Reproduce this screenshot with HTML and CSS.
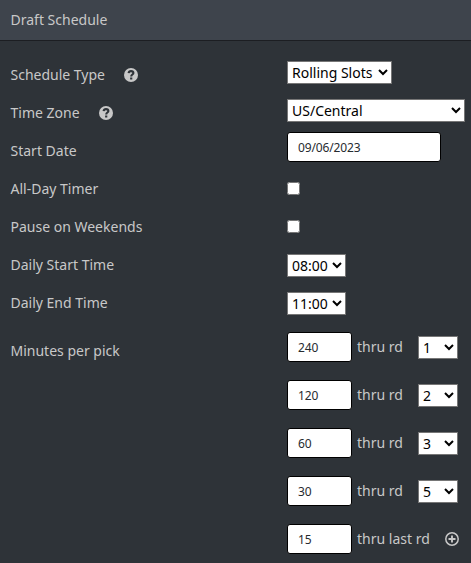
FILE: index.html
```html
<!DOCTYPE html>
<html>
<head>
    <meta charset="utf-8">
    <title>Draft Schedule</title>
    <link rel="stylesheet" href="styles.css">
</head>
<body>
    <div class="panel">
        <div class="panel-heading">Draft Schedule</div>
        <div class="panel-body">
            <div class="row">
                <div class="label">Schedule Type
                    <svg class="help" viewBox="0 0 14 14"><circle cx="7" cy="7" r="7" fill="#c8c8c8"/><path d="M4.6 5.2C4.800 3.700 5.800 3.100 7 3.100c1.400 0 2.400.7 2.400 1.900C9.400 6.600 7.200 6.500 7.200 8.500" fill="none" stroke="#2e3338" stroke-width="2.100"/><rect x="6.100" y="9.500" width="2.200" height="2" fill="#2e3338"/></svg>
                </div>
                <select class="type"><option>Rolling Slots</option></select>
            </div>
            <div class="row">
                <div class="label">Time Zone
                    <svg class="help" viewBox="0 0 14 14"><circle cx="7" cy="7" r="7" fill="#c8c8c8"/><path d="M4.6 5.2C4.800 3.700 5.800 3.100 7 3.100c1.400 0 2.400.7 2.400 1.900C9.400 6.600 7.200 6.500 7.200 8.500" fill="none" stroke="#2e3338" stroke-width="2.100"/><rect x="6.100" y="9.500" width="2.200" height="2" fill="#2e3338"/></svg>
                </div>
                <select class="zone"><option>US/Central</option></select>
            </div>
            <div class="row date-row">
                <div class="label">Start Date</div>
                <input type="text" class="date" value="09/06/2023">
            </div>
            <div class="row">
                <div class="label">All-Day Timer</div>
                <input type="checkbox">
            </div>
            <div class="row">
                <div class="label">Pause on Weekends</div>
                <input type="checkbox">
            </div>
            <div class="row time-row">
                <div class="label">Daily Start Time</div>
                <select class="time"><option>08:00</option></select>
            </div>
            <div class="row time-row">
                <div class="label">Daily End Time</div>
                <select class="time"><option>11:00</option></select>
            </div>
            <div class="minutes">
                <div class="label">Minutes per pick</div>
                <div class="picks">
                    <div class="pick">
                        <input type="text" class="mins" value="240">
                        <span class="thru">thru rd</span>
                        <select class="round"><option>1</option></select>
                    </div>
                    <div class="pick">
                        <input type="text" class="mins" value="120">
                        <span class="thru">thru rd</span>
                        <select class="round"><option>2</option></select>
                    </div>
                    <div class="pick">
                        <input type="text" class="mins" value="60">
                        <span class="thru">thru rd</span>
                        <select class="round"><option>3</option></select>
                    </div>
                    <div class="pick">
                        <input type="text" class="mins" value="30">
                        <span class="thru">thru rd</span>
                        <select class="round"><option>5</option></select>
                    </div>
                    <div class="pick">
                        <input type="text" class="mins" value="15">
                        <span class="thru last">thru last rd</span>
                        <svg class="add" viewBox="0 0 14 14"><circle cx="7" cy="7" r="6.200" fill="none" stroke="#c8c8c8" stroke-width="1.500"/><path d="M7 3.500v7M3.500 7h7" stroke="#c8c8c8" stroke-width="1.900"/></svg>
                    </div>
                </div>
            </div>
        </div>
    </div>
</body>
</html>
```
FILE: styles.css
```css
* {
    box-sizing: border-box;
}

body {
    margin: 0;
    height: 563px;
    overflow: hidden;
    background-color: #2e3338;
    color: #c8c8c8;
    font-family: "Noto Sans", sans-serif;
    font-size: 14px;
    line-height: 20px;
}

.panel-heading {
    height: 41px;
    padding: 10px 10.5px;
    background-color: #3e444c;
    border-bottom: 1px solid #1c1e22;
}

.panel-body {
    padding: 15px 0 0 10.5px;
}

.row {
    display: flex;
    align-items: center;
    height: 38px;
}

.label {
    display: flex;
    align-items: center;
    width: 276.5px;
    flex: none;
}

.help {
    width: 14px;
    height: 14px;
    margin-left: 19px;
}

select {
    height: 23px;
    margin: 0;
    padding: 0;
    color: #000;
    background-color: #fff;
    border: 1px solid #767676;
    border-radius: 0;
    font-family: inherit;
    font-size: 14px;
}

.row select {
    margin-bottom: 5px;
}

.row.time-row select {
    margin-bottom: 0;
    margin-top: 1px;
}

.type {
    width: 105px;
}

.zone {
    width: 178px;
}

.time {
    width: 59px;
}

input[type="text"] {
    height: 30px;
    margin: 0;
    padding: 0 10px;
    color: #272b30;
    background-color: #fff;
    border: 1px solid #000;
    border-radius: 3px;
    font-family: inherit;
    font-size: 12px;
    letter-spacing: -0.15px;
}

input[type="checkbox"] {
    width: 13px;
    height: 13px;
    margin: 0 0 1px;
}

.date {
    width: 154px;
}

.date-row input {
    margin-bottom: 8px;
}

.minutes {
    display: flex;
    padding-top: 1px;
}

.minutes .label {
    height: 56px;
}

.pick {
    display: flex;
    align-items: center;
    height: 48px;
}

.mins {
    width: 65px;
}

.thru {
    width: 61px;
    margin-left: 5px;
}

.thru.last {
    width: 88px;
}

.round {
    width: 40px;
    margin-top: 1px;
}

.add {
    width: 14px;
    height: 14px;
}
```
